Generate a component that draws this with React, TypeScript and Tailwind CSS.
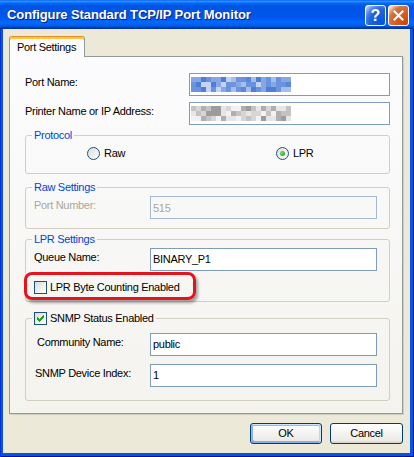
import React from 'react';

function Mosaic({ colors, seed }: { colors: string[]; seed: number }) {
  const cells: React.ReactNode[] = [];
  let s = seed;
  for (let r = 0; r < 3; r++) {
    for (let c = 0; c < 20; c++) {
      s = (s * 9301 + 49297) % 233280;
      const idx = Math.floor((s / 233280) * colors.length);
      cells.push(<rect key={r * 20 + c} x={c * 5} y={r * 5} width={5} height={5} fill={colors[idx]} />);
    }
  }
  return (
    <svg width={100} height={15} className="block">
      {cells}
    </svg>
  );
}

function Radio({ checked }: { checked?: boolean }) {
  return (
    <span className="w-[13px] h-[13px] rounded-full border border-[#1C5180] bg-[linear-gradient(135deg,#DCDCD7,#FFFFFF)] flex items-center justify-center shrink-0">
      {checked && <span className="w-[5px] h-[5px] rounded-full bg-[radial-gradient(circle_at_35%_35%,#6EE06A,#15991A)]" />}
    </span>
  );
}

const CHECK_ROWS: [number, number][][] = [
  [[6, 6]],
  [[5, 6]],
  [[0, 0], [4, 6]],
  [[0, 1], [3, 5]],
  [[0, 4]],
  [[1, 3]],
  [[2, 2]],
];

function Check({ checked }: { checked?: boolean }) {
  return (
    <span className="w-[13px] h-[13px] border border-[#1C5180] bg-[linear-gradient(135deg,#DCDCD7,#FFFFFF)] flex items-center justify-center shrink-0">
      {checked && (
        <svg width="7" height="7" viewBox="0 0 7 7" className="block">
          {CHECK_ROWS.flatMap((row, y) =>
            row.map(([a, b], i) => <rect key={`${y}-${i}`} x={a} y={y} width={b - a + 1} height={1} fill="#21A121" />)
          )}
        </svg>
      )}
    </span>
  );
}

function Label({ children, className = '' }: { children: React.ReactNode; className?: string }) {
  return <span className={`mb-[5px] leading-[13px] whitespace-nowrap ${className}`}>{children}</span>;
}

function Legend({ children }: { children: React.ReactNode }) {
  return <legend className="ml-[6px] px-[2px] leading-[13px] text-[#0046D5]">{children}</legend>;
}

export default function App() {
  return (
    <div className="w-[414px] h-[457px] flex flex-col bg-[#0855DD] shadow-[inset_1px_0_#0831D9,inset_-1px_0_#00138C,inset_0_-1px_#00138C] font-['Liberation_Sans',Arial,sans-serif] text-[11px] tracking-[-0.3px] text-black overflow-hidden">
      {/* Title bar */}
      <div className="h-[29px] shrink-0 flex items-start bg-[linear-gradient(to_bottom,#0058ee_0%,#3593ff_4%,#288eff_6%,#127dff_8%,#036ffc_10%,#0262ee_14%,#0057e5_20%,#0054e3_24%,#0055eb_56%,#005bf5_66%,#026afe_76%,#0062ef_86%,#0052d6_92%,#0040ab_94%,#003092_100%)] pl-[7px] pr-[5px]">
        <span className="mt-[7px] text-[13px] leading-[16px] font-bold text-white tracking-[-0.1px] [text-shadow:1px_1px_0_#0A1E80]">
          Configure Standard TCP/IP Port Monitor
        </span>
        <div className="ml-auto mt-[5px] flex gap-[2px]">
          <div className="w-[21px] h-[21px] rounded-[3px] border border-white bg-[radial-gradient(circle_at_90%_90%,#0054e9_0%,#2263d5_55%,#4479e4_70%,#a3bbec_90%,#ffffff_100%)] flex items-center justify-center text-white font-bold text-[16px] leading-none tracking-normal">
            ?
          </div>
          <div className="w-[21px] h-[21px] rounded-[3px] border border-white bg-[radial-gradient(circle_at_90%_90%,#cc4600_0%,#dc6527_55%,#cd7546_70%,#ffccb2_90%,#ffffff_100%)] flex items-center justify-center">
            <svg width="19" height="19" viewBox="0 0 19 19" className="block">
              <path d="M5.5 5.5 L13.5 13.5 M13.5 5.5 L5.5 13.5" stroke="#ffffff" strokeWidth="2" strokeLinecap="square" />
            </svg>
          </div>
        </div>
      </div>

      {/* Client area */}
      <div className="flex-1 ml-[3px] mr-[4px] mb-[4px] bg-[#ECE9D8] pl-[6px] pt-[7px] flex flex-col">
        {/* Tab */}
        <div className="relative z-10 -mb-px w-[76px] h-[21px] border-x border-t border-x-[#919B9C] border-t-[#E68B2C] rounded-t-[3px] shadow-[inset_0_2px_#FFC73C] bg-[#FCFCFE] pl-[7px] pt-[3px] flex items-center">
          <span className="leading-[13px] mb-[2px] whitespace-nowrap">Port Settings</span>
        </div>

        {/* Panel */}
        <div className="w-[394px] h-[358px] border border-[#919B9C] shadow-[1px_1px_0_#D0CEBF] bg-gradient-to-b from-[#FCFCFE] to-[#F4F3EE] pl-[15px] pr-[12px] pt-[16px] flex flex-col">
          <div className="h-[23px] flex items-center justify-between">
            <Label>Port Name:</Label>
            <div className="w-[201px] h-[23px] border border-[#7F9DB9] bg-white pl-[1px] flex items-center">
              <Mosaic seed={7} colors={['#4E7ED6', '#6A93DD', '#6D94DC', '#86A7E3', '#A5BEEA', '#5A88D9', '#C3D3F1']} />
            </div>
          </div>
          <div className="mt-[6px] h-[23px] flex items-center justify-between">
            <Label>Printer Name or IP Address:</Label>
            <div className="w-[201px] h-[23px] border border-[#7F9DB9] bg-white pl-[1px] flex items-center">
              <Mosaic seed={31} colors={['#9C9C9C', '#AFAFAF', '#C3C3C3', '#D6D6D6', '#E6E6E6', '#F2F2F2']} />
            </div>
          </div>

          {/* Protocol */}
          <fieldset className="mt-[4px] border border-[#D0D0BF] rounded-[3px]">
            <Legend>Protocol</Legend>
            <div className="pt-[5px] pb-[13px] pl-[61px] flex items-center h-auto">
              <div className="w-[189px] flex items-center gap-[4px]">
                <Radio />
                <span className="leading-[13px]">Raw</span>
              </div>
              <div className="flex items-center gap-[4px]">
                <Radio checked />
                <span className="leading-[13px]">LPR</span>
              </div>
            </div>
          </fieldset>

          {/* Raw Settings */}
          <fieldset className="mt-[7px] border border-[#D0D0BF] rounded-[3px]">
            <Legend>Raw Settings</Legend>
            <div className="pt-[2px] pb-[9px] pl-[8px] pr-[12px] flex items-center justify-between">
              <Label className="text-[#ACA899]">Port Number:</Label>
              <div className="w-[227px] h-[23px] border border-[#A5B9CF] bg-transparent pl-[2px] flex items-center text-[#ACA899]">
                <span className="leading-[13px] mt-[1px]">515</span>
              </div>
            </div>
          </fieldset>

          {/* LPR Settings */}
          <fieldset className="mt-[4px] border border-[#D0D0BF] rounded-[3px]">
            <Legend>LPR Settings</Legend>
            <div className="pt-[2px] pb-[7px] pl-[8px] pr-[12px] flex flex-col">
              <div className="flex items-center justify-between">
                <Label>Queue Name:</Label>
                <div className="w-[227px] h-[23px] border border-[#7F9DB9] bg-white pl-[2px] flex items-center">
                  <span className="leading-[13px]">BINARY_P1</span>
                </div>
              </div>
              <div className="relative mt-[10px] flex items-center gap-[3px]">
                <Check />
                <span className="leading-[13px]">LPR Byte Counting Enabled</span>
                <div className="absolute left-[-10px] top-[-9px] w-[172px] h-[28px] rounded-[8px] border-[3px] border-[#E5141C] shadow-[2px_3px_3px_rgba(0,0,0,0.35)] pointer-events-none" />
              </div>
            </div>
          </fieldset>

          {/* SNMP */}
          <fieldset className="mt-[10px] border border-[#D0D0BF] rounded-[3px]">
            <legend className="ml-[6px] px-[2px] leading-[13px]">
              <span className="flex items-center gap-[3px]">
                <Check checked />
                <span className="leading-[13px]">SNMP Status Enabled</span>
              </span>
            </legend>
            <div className="pt-[8px] pb-[13px] pl-[8px] pr-[12px] flex flex-col">
              <div className="flex items-center justify-between">
                <Label className="ml-[3px]">Community Name:</Label>
                <div className="w-[227px] h-[23px] border border-[#7F9DB9] bg-white pl-[2px] flex items-center">
                  <span className="leading-[13px]">public</span>
                </div>
              </div>
              <div className="mt-[8px] flex items-center justify-between">
                <Label className="ml-[1px]">SNMP Device Index:</Label>
                <div className="w-[227px] h-[23px] border border-[#7F9DB9] bg-white pl-[2px] flex items-center">
                  <span className="leading-[13px]">1</span>
                </div>
              </div>
            </div>
          </fieldset>
        </div>

        {/* Buttons */}
        <div className="mt-[9px] pr-[7px] flex justify-end gap-[8px]">
          <button className="w-[72px] h-[21px] rounded-[3px] border border-[#003C74] bg-[linear-gradient(180deg,#FFFFFF,#ECEBE6_86%,#D6D0C5)] shadow-[inset_-1px_1px_#CEE7FF,inset_1px_2px_#98B8EA,inset_-2px_2px_#BCD4F6,inset_1px_-1px_#89ADE4,inset_2px_-2px_#89ADE4] text-[11px] leading-[13px]">
            OK
          </button>
          <button className="w-[73px] h-[21px] rounded-[3px] border border-[#003C74] bg-[linear-gradient(180deg,#FFFFFF,#ECEBE6_86%,#D6D0C5)] text-[11px] leading-[13px]">
            Cancel
          </button>
        </div>
      </div>
    </div>
  );
}
